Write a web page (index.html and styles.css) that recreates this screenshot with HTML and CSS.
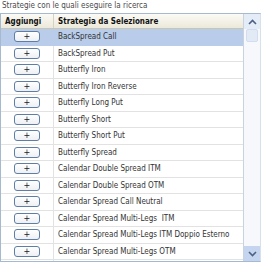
FILE: index.html
```html
<!DOCTYPE html>
<html>
<head>
<meta charset="utf-8">
<link rel="stylesheet" href="styles.css">
</head>
<body>
<div class="caption">Strategie con le quali eseguire la ricerca</div>
<div class="panel">
  <div class="grid">
    <div class="row head">
      <div class="c1">Aggiungi</div>
      <div class="c2">Strategia da Selezionare</div>
    </div>
    <div class="row sel"><div class="c1"><span class="btn">+</span></div><div class="c2">BackSpread Call</div></div>
    <div class="row"><div class="c1"><span class="btn">+</span></div><div class="c2">BackSpread Put</div></div>
    <div class="row"><div class="c1"><span class="btn">+</span></div><div class="c2">Butterfly Iron</div></div>
    <div class="row"><div class="c1"><span class="btn">+</span></div><div class="c2">Butterfly Iron Reverse</div></div>
    <div class="row"><div class="c1"><span class="btn">+</span></div><div class="c2">Butterfly Long Put</div></div>
    <div class="row"><div class="c1"><span class="btn">+</span></div><div class="c2">Butterfly Short</div></div>
    <div class="row"><div class="c1"><span class="btn">+</span></div><div class="c2">Butterfly Short Put</div></div>
    <div class="row"><div class="c1"><span class="btn">+</span></div><div class="c2">Butterfly Spread</div></div>
    <div class="row"><div class="c1"><span class="btn">+</span></div><div class="c2">Calendar Double Spread ITM</div></div>
    <div class="row"><div class="c1"><span class="btn">+</span></div><div class="c2">Calendar Double Spread OTM</div></div>
    <div class="row"><div class="c1"><span class="btn">+</span></div><div class="c2">Calendar Spread Call Neutral</div></div>
    <div class="row"><div class="c1"><span class="btn">+</span></div><div class="c2">Calendar Spread Multi-Legs&nbsp; ITM</div></div>
    <div class="row"><div class="c1"><span class="btn">+</span></div><div class="c2">Calendar Spread Multi-Legs ITM Doppio Esterno</div></div>
    <div class="row"><div class="c1"><span class="btn">+</span></div><div class="c2">Calendar Spread Multi-Legs OTM</div></div>
    <div class="row"><div class="c1"><span class="btn blank"></span></div><div class="c2"></div></div>
  </div>
  <div class="scroll">
    <div class="arrow up"><svg width="9" height="6" viewBox="0 0 9 6"><path d="M1 5 L4.5 1.5 L8 5" fill="none" stroke="#4d6185" stroke-width="1.6"/></svg></div>
    <div class="thumb"></div>
    <div class="track"></div>
    <div class="arrow down"><svg width="9" height="6" viewBox="0 0 9 6"><path d="M1 1 L4.5 4.5 L8 1" fill="none" stroke="#4d6185" stroke-width="1.6"/></svg></div>
  </div>
</div>
</body>
</html>
```

FILE: styles.css
```css
html, body {
  margin: 0;
  padding: 0;
  background: #ffffff;
}
body {
  width: 261px;
  height: 264px;
  overflow: hidden;
  font-family: "DejaVu Sans Condensed", "DejaVu Sans", sans-serif;
  font-size: 8px;
  color: #333333;
}
.caption {
  height: 13px;
  line-height: 12px;
  padding-left: 2px;
  color: #4a4a4a;
}
.panel {
  display: flex;
  height: 249px;
  border: 1px solid #a5b9d0;
  border-right-color: #d7e1ec;
  box-sizing: border-box;
  overflow: hidden;
}
.grid {
  flex: 1;
  overflow: hidden;
  border-right: 1px solid #c9d3df;
}
.row {
  display: grid;
  grid-template-columns: 53px 1fr;
  height: 16.5px;
  box-sizing: border-box;
  border-bottom: 1px solid #e2e2e2;
  align-items: center;
}
.row > div {
  height: 100%;
  display: flex;
  align-items: center;
  white-space: nowrap;
}
.c1 {
  border-right: 1px solid #e2e2e2;
  justify-content: center;
}
.c2 {
  padding-left: 4px;
}
.head {
  height: 15px;
  background: linear-gradient(#fbfaf5, #ece9da);
  border-bottom: 1px solid #c9c5b3;
  font-weight: bold;
  color: #111111;
}
.head .c1 {
  justify-content: flex-start;
  padding-left: 4px;
  border-right: 1px solid #d6d2c2;
}
.sel {
  background: #b9cdea;
  border-bottom-color: #b9cdea;
}
.sel .c1 {
  border-right-color: #b9cdea;
}
.btn {
  display: flex;
  align-items: center;
  justify-content: center;
  width: 26px;
  height: 11px;
  box-sizing: border-box;
  border: 1px solid #5f7ea6;
  border-radius: 3px;
  background: linear-gradient(#ffffff, #eef0f4);
  color: #222222;
  font-size: 9px;
  line-height: 1;
}
.scroll {
  width: 16px;
  display: flex;
  flex-direction: column;
  background: #f6f8fb;
}
.arrow {
  height: 15px;
  display: flex;
  align-items: center;
  justify-content: center;
  background: #e4ecf8;
}
.thumb {
  height: 11px;
  margin: 0 2px;
  background: #e2eaf6;
  border: 1px solid #d3ddef;
  border-radius: 2px;
}
.track {
  flex: 1;
}
.arrow.down {
  background: #c5d5f0;
}
```
